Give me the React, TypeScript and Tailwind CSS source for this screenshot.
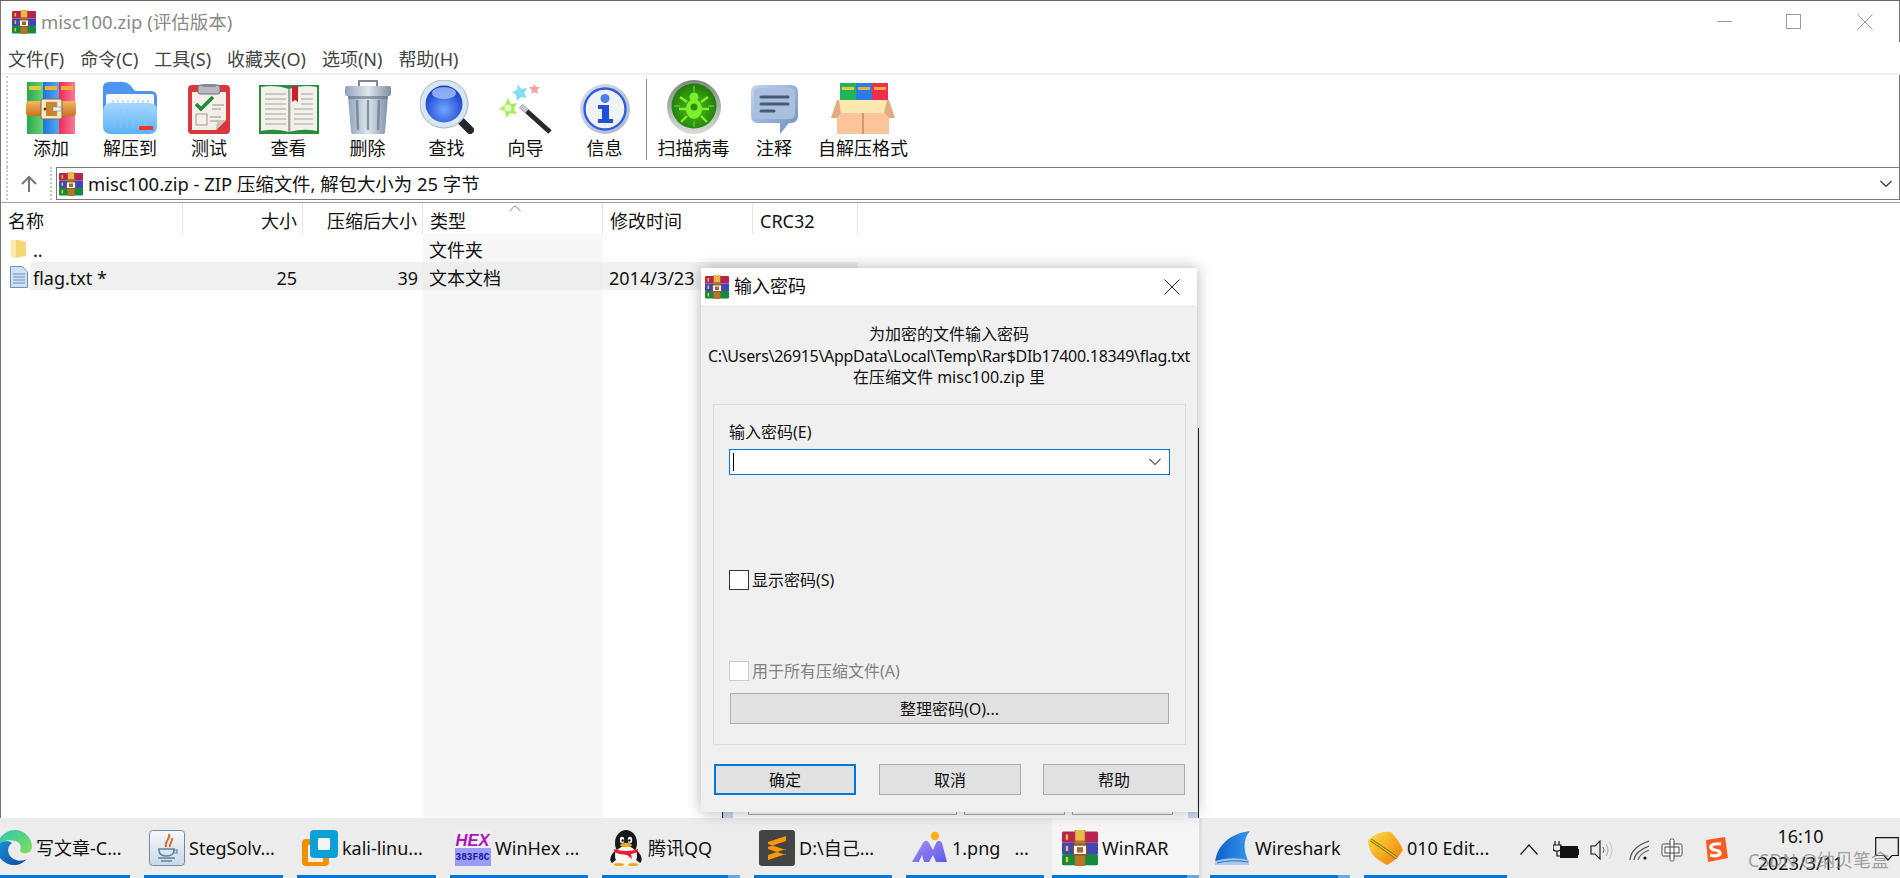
import React from "react";

function RarSmall({ s = 24 }: { s?: number }) {
  return (
    <svg width={s} height={s} viewBox="0 0 24 24" className="shrink-0">
      <rect x="0" y="1" width="24" height="7.5" rx="1" fill="#b9244f" />
      <rect x="0" y="8.5" width="24" height="7.5" fill="#3f46b8" />
      <rect x="0" y="16" width="24" height="7.5" rx="1" fill="#138a3c" />
      <rect x="2.5" y="3" width="1.6" height="3.5" fill="#f0c030" />
      <rect x="2.5" y="10.5" width="1.6" height="3.5" fill="#f0c030" />
      <rect x="2.5" y="18" width="1.6" height="3.5" fill="#f0c030" />
      <rect x="8.5" y="0" width="7" height="24" fill="#b9722a" />
      <rect x="9" y="0" width="6" height="7" fill="#e8bb48" />
      <rect x="7.5" y="10" width="9" height="6.5" fill="#f2f2f2" stroke="#7b4a1c" strokeWidth="0.8" />
      <rect x="10" y="11.5" width="4" height="3.5" fill="#9a6a30" />
    </svg>
  );
}

function IconAdd() {
  return (
    <svg width="50" height="52" viewBox="0 0 50 52">
      <defs>
        <linearGradient id="ga" x1="0" y1="0" x2="1" y2="0"><stop offset="0" stopColor="#2aa84c" /><stop offset="1" stopColor="#6ad070" /></linearGradient>
        <linearGradient id="gb" x1="0" y1="0" x2="1" y2="0"><stop offset="0" stopColor="#1c74e0" /><stop offset="1" stopColor="#58a8f5" /></linearGradient>
        <linearGradient id="gc" x1="0" y1="0" x2="1" y2="0"><stop offset="0" stopColor="#ee2a58" /><stop offset="1" stopColor="#f87a98" /></linearGradient>
        <linearGradient id="gd" x1="0" y1="0" x2="0" y2="1"><stop offset="0" stopColor="#f5b860" /><stop offset="1" stopColor="#c87424" /></linearGradient>
      </defs>
      <rect x="1" y="0" width="16" height="52" fill="url(#ga)" />
      <rect x="17" y="0" width="16" height="52" fill="url(#gb)" />
      <rect x="33" y="0" width="16" height="52" fill="url(#gc)" />
      <rect x="3" y="4" width="12" height="4" fill="#e8c93a" />
      <rect x="19" y="4" width="12" height="4" fill="#f0b030" />
      <rect x="35" y="4" width="12" height="4" fill="#f0b030" />
      <rect x="0" y="19" width="50" height="15" rx="3" fill="url(#gd)" />
      <rect x="15" y="17" width="21" height="20" rx="2" fill="#f4e9d0" stroke="#8a6a3a" strokeWidth="1" />
      <rect x="20" y="20" width="11" height="14" fill="#c8862e" />
      <circle cx="19" cy="27" r="1.5" fill="#5a3a10" />
      <rect x="27" y="25" width="8" height="4" fill="#f4f4f4" stroke="#888" strokeWidth="0.6" />
    </svg>
  );
}

function IconFolder() {
  return (
    <svg width="54" height="52" viewBox="0 0 54 52">
      <defs>
        <linearGradient id="fa" x1="0" y1="0" x2="0" y2="1"><stop offset="0" stopColor="#a8d8ff" /><stop offset="1" stopColor="#5ab2f6" /></linearGradient>
      </defs>
      <path d="M0 6Q0 0 6 0H20Q24 0 27 3L32 9H48Q54 9 54 15V30H0Z" fill="#4f94f0" />
      <rect x="3" y="12" width="48" height="22" rx="2" fill="#f4f8fc" />
      <g stroke="#b8c4d2" strokeWidth="1">
        <path d="M10 18V26M15 18V26M20 18V26M25 18V26M30 18V26M35 18V26M40 18V26M45 18V26" />
      </g>
      <path d="M0 30Q0 21 8 21H46Q54 21 54 29V44Q54 52 46 52H8Q0 52 0 44Z" fill="url(#fa)" />
      <g stroke="#8cc8f4" strokeWidth="1" opacity="0.7">
        <path d="M12 27V46M18 27V46M24 27V46M30 27V46M36 27V46M42 27V46" />
      </g>
      <rect x="36" y="44" width="14" height="4" fill="#e8382c" />
    </svg>
  );
}

function IconClip() {
  return (
    <svg width="42" height="50" viewBox="0 0 42 50">
      <rect x="0" y="1" width="42" height="49" rx="4" fill="#d9363e" />
      <path d="M4 8H38V36L28 46H4Z" fill="#f4f0e8" />
      <path d="M28 46L38 36H30Q28 40 28 46Z" fill="#c9c4ba" />
      <rect x="10" y="1" width="22" height="9" rx="2" fill="#b8b8c0" stroke="#6b6b75" strokeWidth="1" />
      <rect x="14" y="0" width="14" height="3" rx="1.5" fill="#8a8a92" />
      <path d="M8 20L13 25L25 13" fill="none" stroke="#1f8a3a" strokeWidth="3.6" />
      <path d="M24 21H36M24 25H33" stroke="#b5b0a6" strokeWidth="1.4" />
      <rect x="8" y="30" width="11" height="11" fill="#f4f0e8" stroke="#9c9a94" strokeWidth="1" />
      <path d="M22 33H33M22 37H30" stroke="#b5b0a6" strokeWidth="1.4" />
    </svg>
  );
}

function IconBook() {
  return (
    <svg width="60" height="49" viewBox="0 0 60 49">
      <path d="M0 0H60V49H0Z" fill="#2a8c3e" />
      <path d="M2 2Q16 -1 30 4Q44 -1 58 2V46Q44 43 30 47Q16 43 2 46Z" fill="#f2f0ea" />
      <rect x="29" y="4" width="2.5" height="43" fill="#a8a69f" />
      <g stroke="#bdbdb5" strokeWidth="1.3">
        <path d="M6 9H27M6 14H27M6 19H27M6 24H27M6 29H27M6 34H27M6 39H27" />
        <path d="M42 9H54M42 14H54M42 19H54M35 24H54M35 29H54M35 34H54M35 39H54" />
      </g>
      <path d="M33 1H39V17L36 15L33 17Z" fill="#c8202c" />
    </svg>
  );
}

function IconTrash() {
  return (
    <svg width="46" height="54" viewBox="0 0 46 54">
      <defs>
        <linearGradient id="ta" x1="0" y1="0" x2="1" y2="0"><stop offset="0" stopColor="#8fa3b8" /><stop offset="0.5" stopColor="#dfe7ee" /><stop offset="1" stopColor="#7c90a4" /></linearGradient>
      </defs>
      <path d="M14 6V1H32V6" fill="none" stroke="#7c8a98" strokeWidth="2" />
      <rect x="0" y="6" width="46" height="10" rx="2" fill="url(#ta)" />
      <path d="M3 16H43L40 52Q40 54 37 54H9Q6 54 6 52Z" fill="url(#ta)" />
      <g stroke="#66798c" strokeWidth="2.4" opacity="0.75">
        <path d="M12 20L13 50M23 20V50M34 20L33 50" />
      </g>
      <rect x="3" y="16" width="40" height="3" fill="#5f7286" opacity="0.6" />
    </svg>
  );
}

function IconFind() {
  return (
    <svg width="54" height="54" viewBox="0 0 54 54">
      <defs>
        <radialGradient id="fi" cx="0.5" cy="0.65" r="0.65"><stop offset="0" stopColor="#6ea6ff" /><stop offset="1" stopColor="#1438c8" /></radialGradient>
      </defs>
      <path d="M36 36L50 50" stroke="#23282e" strokeWidth="8" strokeLinecap="round" />
      <circle cx="24" cy="24" r="24" fill="#d8e6ee" stroke="#9cb4c4" strokeWidth="1" />
      <circle cx="24" cy="24" r="18.5" fill="url(#fi)" />
      <ellipse cx="24" cy="13" rx="12" ry="6" fill="#a8c8ff" opacity="0.75" />
    </svg>
  );
}

function IconWand() {
  return (
    <svg width="54" height="50" viewBox="0 0 54 50">
      <path d="M22 22L51 48" stroke="#2a2a2e" strokeWidth="5" />
      <path d="M22 22L28 27" stroke="#c8c8cc" strokeWidth="5" />
      <path d="M9 14L12 20L18 19L15 25L18 30L11 29L7 34L6 27L0 25L6 21Z" fill="#a8ee50" />
      <circle cx="9" cy="24" r="3.5" fill="#e8ffd0" />
      <path d="M19 0L22 5L28 4L25 9L28 14L22 13L18 17L17 11L13 8L18 6Z" fill="#7fe0f5" />
      <path d="M35 0L37 3L41 3L38 6L39 10L35 8L32 10L33 6L30 3L34 3Z" fill="#f8a0a8" />
    </svg>
  );
}

function IconInfo() {
  return (
    <svg width="50" height="50" viewBox="0 0 50 50">
      <defs>
        <linearGradient id="ia" x1="0" y1="0" x2="1" y2="1"><stop offset="0" stopColor="#d8dfe8" /><stop offset="1" stopColor="#aab8c8" /></linearGradient>
      </defs>
      <circle cx="25" cy="25" r="25" fill="url(#ia)" />
      <circle cx="25" cy="25" r="20.5" fill="#f0f2f6" stroke="#2f5fe0" strokeWidth="2.4" />
      <circle cx="25" cy="14.5" r="4.5" fill="#4f80e8" />
      <path d="M18 21H29V35H33V39H18V35H22V25H18Z" fill="#1f50d8" />
    </svg>
  );
}

function IconBug() {
  return (
    <svg width="54" height="54" viewBox="0 0 54 54">
      <defs>
        <linearGradient id="ba" x1="0" y1="0" x2="0" y2="1"><stop offset="0" stopColor="#7d8a7a" /><stop offset="1" stopColor="#d8dcd8" /></linearGradient>
        <radialGradient id="bb" cx="0.5" cy="0.55" r="0.55"><stop offset="0" stopColor="#4fc01a" /><stop offset="1" stopColor="#1f7a0c" /></radialGradient>
      </defs>
      <circle cx="27" cy="27" r="27" fill="url(#ba)" />
      <circle cx="27" cy="26" r="22.5" fill="url(#bb)" />
      <path d="M27 6V12M27 41V47M7 26H13M41 26H47" stroke="#5cc82c" strokeWidth="1.5" />
      <ellipse cx="27" cy="29" rx="8" ry="10" fill="#7df02c" />
      <circle cx="27" cy="17" r="4.5" fill="#7df02c" />
      <path d="M20 22L13 17M20 29H12M20 36L14 42M34 22L41 17M34 29H42M34 36L40 42" stroke="#7df02c" strokeWidth="2.4" fill="none" />
      <circle cx="27" cy="27" r="3.5" fill="#2f9010" />
    </svg>
  );
}

function IconNote() {
  return (
    <svg width="47" height="49" viewBox="0 0 47 49">
      <defs>
        <linearGradient id="na" x1="0" y1="0" x2="1" y2="1"><stop offset="0" stopColor="#c4d4ee" /><stop offset="1" stopColor="#6c90c4" /></linearGradient>
      </defs>
      <path d="M7 0H40Q47 0 47 7V30Q47 38 40 38H38L29 49V38H7Q0 38 0 30V7Q0 0 7 0Z" fill="url(#na)" />
      <path d="M7 3H40Q44 3 44 8V28Q44 34 38 34H8Q3 34 3 28V8Q3 3 7 3Z" fill="#a8bfe0" />
      <path d="M10 12H37M10 19H37M10 26H23" stroke="#4b5a70" strokeWidth="3" strokeLinecap="round" />
    </svg>
  );
}

function IconBox() {
  return (
    <svg width="64" height="51" viewBox="0 0 64 51">
      <rect x="9" y="0" width="16" height="20" fill="#22b45c" />
      <rect x="25" y="0" width="16" height="20" fill="#2a7ce8" />
      <rect x="41" y="0" width="16" height="20" fill="#f02c50" />
      <rect x="11" y="4" width="12" height="3" fill="#e8c93a" />
      <rect x="27" y="4" width="12" height="3" fill="#f0b030" />
      <rect x="43" y="4" width="12" height="3" fill="#f0b030" />
      <rect x="6" y="30" width="52" height="21" fill="#fcc49a" />
      <rect x="31" y="30" width="2" height="21" fill="#d8986e" />
      <path d="M0 35L6 17H58L64 35H58L54 30H10L6 35Z" fill="#e6aa80" />
      <path d="M8 17H56L53 30H10Z" fill="#fde8b0" />
    </svg>
  );
}

function EdgeIcon() {
  return (
    <svg width="36" height="36" viewBox="0 0 36 36" className="shrink-0">
      <defs>
        <linearGradient id="ea" x1="0" y1="0" x2="1" y2="1"><stop offset="0" stopColor="#2dc6b0" /><stop offset="1" stopColor="#7ee05c" /></linearGradient>
        <linearGradient id="eb" x1="0" y1="0" x2="1" y2="1"><stop offset="0" stopColor="#1a90d8" /><stop offset="1" stopColor="#0c4aa0" /></linearGradient>
      </defs>
      <path d="M1 17C2 7 10 0 19 0C29 0 36 8 36 17C36 22 31 24 27 23C20 22 30 14 19 11C11 9 4 12 1 17Z" fill="url(#ea)" />
      <path d="M1 17C4 11 12 9 16 13C11 16 11 23 15 27C20 32 27 31 31 29C26 35 17 37 10 33C3 29 0 23 1 17Z" fill="url(#eb)" />
    </svg>
  );
}

function JavaIcon() {
  return (
    <svg width="36" height="36" viewBox="0 0 36 36" className="shrink-0">
      <defs>
        <linearGradient id="ja" x1="0" y1="0" x2="0" y2="1"><stop offset="0" stopColor="#f6f8fa" /><stop offset="1" stopColor="#c8d8e8" /></linearGradient>
      </defs>
      <rect x="0.5" y="0.5" width="35" height="35" rx="3" fill="url(#ja)" stroke="#6f8aa4" />
      <path d="M20 4C22 9 15 11 17 17M23 8C24 12 20 13 21 17" fill="none" stroke="#d8702a" strokeWidth="2" />
      <path d="M10 19H25V20C25 25 22 26 17 26C13 26 10 25 10 20Z" fill="none" stroke="#5b82a0" strokeWidth="1.6" />
      <path d="M9 28H26M12 31H23" stroke="#5b82a0" strokeWidth="1.6" />
      <path d="M25 20H28V23H25" fill="none" stroke="#5b82a0" strokeWidth="1.2" />
    </svg>
  );
}

function VmIcon() {
  return (
    <svg width="36" height="36" viewBox="0 0 36 36" className="shrink-0">
      <rect x="0" y="9" width="27" height="27" rx="4" fill="#f09000" />
      <rect x="6" y="15" width="15" height="17" fill="#f8efe2" />
      <rect x="8" y="0" width="28" height="28" rx="4" fill="#0c9fd8" />
      <rect x="16" y="8" width="12" height="12" rx="1.5" fill="#f4f4f4" />
    </svg>
  );
}

function HexIcon() {
  return (
    <svg width="36" height="36" viewBox="0 0 36 36" className="shrink-0">
      <rect width="36" height="18" fill="#f0f0f4" />
      <rect y="18" width="36" height="18" fill="#9c9cf8" />
      <text x="0.5" y="16" fontSize="16" fontWeight="900" fontStyle="italic" fill="#b010b8" fontFamily="Liberation Sans" textLength="34" lengthAdjust="spacingAndGlyphs">HEX</text>
      <text x="0.5" y="30" fontSize="10" fontWeight="700" fill="#2020a0" fontFamily="Liberation Mono" textLength="34" lengthAdjust="spacingAndGlyphs">383F8C</text>
    </svg>
  );
}

function QQIcon() {
  return (
    <svg width="36" height="36" viewBox="0 0 36 36" className="shrink-0">
      <path d="M7 21C2 25 1 31 4 33L9 29Z M29 21C34 25 35 31 32 33L27 29Z" fill="#1a1a1a" />
      <ellipse cx="18" cy="13" rx="11" ry="13" fill="#18181a" />
      <ellipse cx="18" cy="26" rx="11" ry="10" fill="#fafafa" />
      <ellipse cx="14" cy="10" rx="2.2" ry="3.2" fill="#fff" />
      <ellipse cx="22" cy="10" rx="2.2" ry="3.2" fill="#fff" />
      <circle cx="14.6" cy="10.5" r="1.2" fill="#111" />
      <circle cx="21.4" cy="10.5" r="1.2" fill="#111" />
      <ellipse cx="18" cy="15" rx="6" ry="2.2" fill="#f0a818" />
      <path d="M6 19Q18 23 30 19L30 22Q24 24 23 24L24 29L19 25Q12 25 6 22Z" fill="#e82030" />
      <ellipse cx="11" cy="34.5" rx="5" ry="1.5" fill="#f0a818" />
      <ellipse cx="25" cy="34.5" rx="5" ry="1.5" fill="#f0a818" />
    </svg>
  );
}

function SublimeIcon() {
  return (
    <svg width="36" height="36" viewBox="0 0 36 36" className="shrink-0">
      <rect width="36" height="36" rx="3" fill="#444444" />
      <path d="M27 6L9 12V17L27 11Z M9 14L27 20V25L9 19Z M27 19L9 25V30L27 24Z" fill="#ff9800" />
    </svg>
  );
}

function MeituIcon() {
  return (
    <svg width="36" height="36" viewBox="0 0 36 36" className="shrink-0">
      <defs>
        <linearGradient id="ma" x1="0" y1="0" x2="1" y2="1"><stop offset="0" stopColor="#a78af5" /><stop offset="1" stopColor="#5c5ce8" /></linearGradient>
      </defs>
      <circle cx="23" cy="6" r="4.2" fill="#fdb010" />
      <path d="M0 32L11 13C13 10 15 10 17 13L21 20L24 13C26 10 28 10 30 13L35 32H24L21 25L17 32H12L10 25L7 32Z" fill="url(#ma)" />
    </svg>
  );
}

function SharkIcon() {
  return (
    <svg width="36" height="36" viewBox="0 0 36 36" className="shrink-0">
      <defs>
        <linearGradient id="sa" x1="0" y1="0" x2="1" y2="0"><stop offset="0" stopColor="#0a60c8" /><stop offset="1" stopColor="#3c96ec" /></linearGradient>
      </defs>
      <path d="M0 34C1 18 12 4 35 1C27 10 29 22 34 33Z" fill="url(#sa)" />
      <path d="M0 31Q16 26 34 30V35H0Z" fill="#a8c8ec" />
      <path d="M2 33Q17 29 33 32" stroke="#2a6ebc" strokeWidth="1" fill="none" />
    </svg>
  );
}

function EditorIcon() {
  return (
    <svg width="36" height="36" viewBox="0 0 36 36" className="shrink-0">
      <defs>
        <linearGradient id="oa" x1="0" y1="0" x2="1" y2="1"><stop offset="0" stopColor="#fce040" /><stop offset="1" stopColor="#f07808" /></linearGradient>
      </defs>
      <path d="M1 10Q12 0 24 2Q32 10 36 20Q30 30 20 35Q10 30 5 24Q1 16 1 10Z" fill="url(#oa)" />
      <path d="M4 10L30 28" stroke="#7a6a10" strokeWidth="3" />
      <path d="M4 10L30 28" stroke="#e8d030" strokeWidth="1.2" />
    </svg>
  );
}

function Tool({ label, w, children }: { label: string; w: string; children: React.ReactNode }) {
  return (
    <div className={`flex flex-col items-center shrink-0 ${w}`}>
      <div className="flex h-[56px] items-end justify-center pb-[2px]">{children}</div>
      <span className="whitespace-nowrap text-[18px] leading-[24px]">{label}</span>
    </div>
  );
}

function Cell({ className = "", children }: { className?: string; children?: React.ReactNode }) {
  return (
    <div className={`flex h-[28px] items-center whitespace-nowrap text-[18px] ${className}`}>
      {typeof children === "string" ? <span className="pt-[4px]">{children}</span> : children}
    </div>
  );
}

function Head({ right, children }: { right?: boolean; children?: React.ReactNode }) {
  return (
    <div className={`flex h-[31px] items-center border-r border-[#e5e5e5] pt-[6px] text-[18px] whitespace-nowrap ${right ? "justify-end pr-[5px]" : "pl-[7px]"}`}>
      {children}
    </div>
  );
}

function Task({
  icon, text, className = "", lead = "pl-[5px]", tail = false, active = false,
}: { icon: React.ReactNode; text: string; className?: string; lead?: string; tail?: boolean; active?: boolean }) {
  return (
    <div className={`flex h-full shrink-0 flex-col ${active ? "bg-[#f6f6f6]" : ""} ${className}`}>
      <div className={`flex flex-1 items-center gap-[4px] pt-[3px] ${lead}`}>
        {icon}
        <span className="whitespace-pre text-[18px] text-[#111]">{text}</span>
      </div>
      <div className="flex h-[3px]">
        <div className="flex-1 bg-[#0078d7]" />
        {tail && <div className="w-[12px] bg-[#68a9e2]" />}
      </div>
    </div>
  );
}

export default function App() {
  return (
    <div className="relative flex h-[878px] w-[1900px] flex-col overflow-hidden bg-white font-['Noto_Sans','Noto_Sans_CJK_SC',sans-serif] text-[#111]">
      <div className="h-px bg-[#6b6660]" />
      <div className="flex min-h-0 flex-1 flex-col border-l border-[#777]">
        {/* title */}
        <div className="flex h-[41px] items-center border-r border-[#777] pl-[11px] text-[#8a8a8a]">
          <RarSmall />
          <span className="ml-[5px] pt-[1px] text-[18.5px]">misc100.zip (评估版本)</span>
          <div className="ml-auto flex items-center pr-[26px]">
            <div className="h-px w-[15px] bg-[#999]" />
            <div className="ml-[54px] h-[15px] w-[15px] border border-[#999]" />
            <svg width="16" height="16" viewBox="0 0 16 16" className="ml-[56px]">
              <path d="M0.5 0.5L15.5 15.5M15.5 0.5L0.5 15.5" stroke="#999" strokeWidth="1" />
            </svg>
          </div>
        </div>
        {/* menu */}
        <div className="flex h-[31px] items-center gap-[16px] pl-[7px] pt-[3px] text-[18px] text-[#444]">
          <span>文件(F)</span>
          <span>命令(C)</span>
          <span>工具(S)</span>
          <span>收藏夹(O)</span>
          <span>选项(N)</span>
          <span>帮助(H)</span>
        </div>
        <div className="h-[2px] bg-[#f0f0f0]" />
        {/* toolbar */}
        <div className="flex h-[92px] border-r border-[#777]">
          <div className="ml-[5px] mt-[1px] w-0 border-l-2 border-dotted border-[#c8c8c8]" />
          <div className="ml-[3px] flex items-start pt-[5px]">
            <Tool label="添加" w="w-[80px]"><IconAdd /></Tool>
            <Tool label="解压到" w="w-[78px]"><IconFolder /></Tool>
            <Tool label="测试" w="w-[80px]"><IconClip /></Tool>
            <Tool label="查看" w="w-[79px]"><IconBook /></Tool>
            <Tool label="删除" w="w-[79px]"><IconTrash /></Tool>
            <Tool label="查找" w="w-[79px]"><IconFind /></Tool>
            <Tool label="向导" w="w-[79px]"><IconWand /></Tool>
            <Tool label="信息" w="w-[79px]"><IconInfo /></Tool>
            <div className="ml-[2px] mt-[-1px] h-[81px] w-px bg-[#888]" />
            <Tool label="扫描病毒" w="w-[93px]"><IconBug /></Tool>
            <Tool label="注释" w="w-[68px]"><IconNote /></Tool>
            <Tool label="自解压格式" w="w-[110px]"><IconBox /></Tool>
          </div>
        </div>
        {/* address */}
        <div className="flex h-[33px] items-stretch">
          <div className="ml-[5px] w-0 border-l-2 border-dotted border-[#c8c8c8]" />
          <div className="flex w-[42px] items-center justify-center">
            <svg width="18" height="18" viewBox="0 0 18 18">
              <path d="M9 17V2M2 9L9 2L16 9" fill="none" stroke="#777" strokeWidth="2" />
            </svg>
          </div>
          <div className="w-0 border-l-2 border-dotted border-[#c8c8c8]" />
          <div className="ml-[4px] flex flex-1 items-center border border-[#7a7a7a] pl-[2px] pr-[7px] text-[18.4px]">
            <RarSmall />
            <span className="ml-[5px]">misc100.zip - ZIP 压缩文件, 解包大小为 25 字节</span>
            <svg width="12" height="8" viewBox="0 0 12 8" className="ml-auto">
              <path d="M0.5 1L6 6.5L11.5 1" fill="none" stroke="#333" strokeWidth="1.2" />
            </svg>
          </div>
        </div>
        <div className="h-[3px] border-b border-[#a0a0a0]" />
        {/* list */}
        <div className="flex min-h-0 flex-1">
          <div className="w-[182px]">
            <Head>名称</Head>
            <Cell>
              <svg width="16" height="20" viewBox="0 0 16 20" className="ml-[10px] mr-[6px] mt-[2px]">
                <path d="M0 1H8L15 3V17L4 19L0 17Z" fill="#f6d777" />
                <path d="M0 1H5V19L0 17Z" fill="#fbe9a8" />
              </svg>
              <span className="pt-[4px]">..</span>
            </Cell>
            <Cell>
              <svg width="18" height="22" viewBox="0 0 18 22" className="ml-[9px] mr-[3px] mt-[1px]">
                <path d="M0.5 0.5H12L17.5 6V21.5H0.5Z" fill="#cfe2f3" stroke="#6b8fb5" />
                <path d="M3 8H15M3 11H15M3 14H15M3 17H15" stroke="#6b8fb5" strokeWidth="1" />
              </svg>
              <span className="flex h-full flex-1 items-center bg-[#f0f0f0] pl-[2px] pt-[4px]">flag.txt *</span>
            </Cell>
          </div>
          <div className="w-[120px]">
            <Head right>大小</Head>
            <Cell />
            <Cell className="justify-end bg-[#f0f0f0] pr-[6px]">25</Cell>
          </div>
          <div className="w-[120px]">
            <Head right>压缩后大小</Head>
            <Cell />
            <Cell className="justify-end bg-[#f0f0f0] pr-[5px]">39</Cell>
          </div>
          <div className="flex w-[180px] flex-col">
            <Head>
              类型
              <svg width="12" height="7" viewBox="0 0 12 7" className="mb-[26px] ml-[43px]">
                <path d="M0.5 6L6 0.8L11.5 6" fill="none" stroke="#888" strokeWidth="1" />
              </svg>
            </Head>
            <div className="flex-1 bg-[#f7f7f7]">
              <Cell className="pl-[6px]">文件夹</Cell>
              <Cell className="bg-[#eeeeee] pl-[6px]">文本文档</Cell>
            </div>
          </div>
          <div className="w-[150px]">
            <Head>修改时间</Head>
            <Cell />
            <Cell className="bg-[#f0f0f0] pl-[6px]">2014/3/23</Cell>
          </div>
          <div className="w-[105px]">
            <Head>CRC32</Head>
            <Cell />
            <Cell className="bg-[#f0f0f0]" />
          </div>
        </div>
      </div>

      {/* taskbar */}
      <div className="flex h-[60px] shrink-0 items-stretch bg-[#ececec]">
        <Task className="ml-[-8px] w-[138px]" lead="pl-[4px]" icon={<EdgeIcon />} text="写文章-C..." />
        <Task className="ml-[14px] w-[139px]" icon={<JavaIcon />} text="StegSolv..." />
        <Task className="ml-[14px] w-[139px]" icon={<VmIcon />} text="kali-linu..." />
        <Task className="ml-[14px] w-[138px]" icon={<HexIcon />} text="WinHex ..." />
        <Task className="ml-[14px] w-[138px]" lead="pl-[6px]" tail icon={<QQIcon />} text="腾讯QQ" />
        <Task className="ml-[14px] w-[138px]" icon={<SublimeIcon />} text="D:\自己..." />
        <Task className="ml-[14px] w-[138px]" lead="pl-[6px]" icon={<MeituIcon />} text="1.png   ..." />
        <Task className="ml-[8px] w-[150px] border-r-[3px] border-[#e0e0e0]" lead="pl-[10px]" active tail icon={<RarSmall s={36} />} text="WinRAR" />
        <Task className="ml-[8px] w-[140px]" tail icon={<SharkIcon />} text="Wireshark" />
        <Task className="ml-[14px] w-[143px]" lead="pl-[3px]" icon={<EditorIcon />} text="010 Edit..." />
        {/* tray */}
        <div className="flex items-center pt-[3px]">
          <svg width="18" height="11" viewBox="0 0 18 11" className="ml-[13px]">
            <path d="M0.5 10.5L9 1L17.5 10.5" fill="none" stroke="#111" strokeWidth="1.2" />
          </svg>
          <svg width="26" height="18" viewBox="0 0 26 18" className="ml-[15px]">
            <path d="M2 0V4M6 0V4M0 4H8V7Q8 10 5 10H3Q0 10 0 7ZM4 10V15H8" fill="none" stroke="#111" strokeWidth="1.2" />
            <rect x="7" y="5" width="18" height="12" fill="#111" />
            <rect x="25" y="8" width="1" height="6" fill="#111" />
          </svg>
          <svg width="23" height="22" viewBox="0 0 23 22" className="ml-[11px]">
            <path d="M1 7H5L10 2V20L5 15H1Z" fill="none" stroke="#111" strokeWidth="1.1" />
            <path d="M13 8Q15 11 13 14" fill="none" stroke="#666" />
            <path d="M16 5Q20 11 16 17" fill="none" stroke="#aaa" />
            <path d="M19 2Q25 11 19 20" fill="none" stroke="#ccc" />
          </svg>
          <svg width="20" height="20" viewBox="0 0 20 20" className="ml-[16px]">
            <path d="M1 20Q2 7 20 1" fill="none" stroke="#555" strokeWidth="1.3" />
            <path d="M5 20Q6 11 20 6" fill="none" stroke="#555" strokeWidth="1.3" />
            <path d="M9 20Q10 14 20 10" fill="none" stroke="#777" strokeWidth="1.3" />
            <circle cx="16" cy="18" r="1.6" fill="#111" />
          </svg>
          <svg width="24" height="24" viewBox="0 0 24 24" className="ml-[11px]">
            <rect x="2" y="6" width="20" height="12" rx="1.5" fill="#fff" stroke="#444" strokeWidth="1" />
            <rect x="10" y="1" width="4" height="22" rx="1.5" fill="#fff" stroke="#444" strokeWidth="1" />
            <rect x="5" y="9" width="14" height="6" fill="none" stroke="#444" strokeWidth="1" />
          </svg>
          <svg width="25" height="26" viewBox="0 0 25 26" className="ml-[19px]">
            <path d="M3 3L22 0L25 21L5 25Z" fill="#fc5a1e" />
            <path d="M18 7Q10 6 8 9Q7 12 12 13Q18 14 17 17Q14 20 7 18" fill="none" stroke="#fff" strokeWidth="3.2" />
          </svg>
          <div className="ml-[25px] flex w-[95px] flex-col items-center text-[18px] leading-[27px]">
            <span>16:10</span>
            <span>2023/3/11</span>
          </div>
          <svg width="25" height="25" viewBox="0 0 25 25" className="ml-[27px] shrink-0">
            <path d="M0.7 0.7H23.3V18.5H17L13 23L9 18.5H0.7Z" fill="none" stroke="#111" strokeWidth="1.2" />
          </svg>
        </div>
      </div>

      {/* window behind the dialog */}
      <div className="absolute left-[722px] top-[428px] flex h-[390px] w-[477px] flex-col justify-end border-x border-[#222]">
        <div className="flex h-[6px] items-start">
          <div className="h-full w-[10px] bg-[#c8d8ec]" />
          <div className="ml-[15px] h-[3px] w-[209px] border border-t-0 border-[#aaa]" />
          <div className="ml-[7px] h-[3px] w-[101px] border border-t-0 border-[#aaa]" />
          <div className="ml-[7px] h-[3px] w-[101px] border border-t-0 border-[#aaa]" />
          <div className="ml-auto h-full w-[10px] bg-[#c8d8ec]" />
        </div>
      </div>

      {/* dialog */}
      <div className="absolute left-[701px] top-[268px] flex h-[544px] w-[496px] flex-col bg-[#f0f0f0] text-[16px] shadow-[0_0_14px_rgba(0,0,0,0.3)]">
        <div className="flex h-[37px] items-center bg-white pl-[4px] pr-[17px] text-[18px]">
          <RarSmall />
          <span className="ml-[5px]">输入密码</span>
          <svg width="16" height="16" viewBox="0 0 16 16" className="ml-auto">
            <path d="M0.5 0.5L15.5 15.5M15.5 0.5L0.5 15.5" stroke="#222" strokeWidth="1" />
          </svg>
        </div>
        <div className="mt-[19px] flex flex-col items-center text-[16px] leading-[21.5px]">
          <span>为加密的文件输入密码</span>
          <span className="whitespace-nowrap tracking-[-0.3px]">C:\Users\26915\AppData\Local\Temp\Rar$DIb17400.18349\flag.txt</span>
          <span>在压缩文件 misc100.zip 里</span>
        </div>
        <div className="mx-[12px] mt-[15px] flex h-[341px] w-[473px] flex-col border border-[#dcdcdc] pl-[15px]">
          <div className="mt-[16px] h-[20px] pt-[1px] leading-[20px]">输入密码(E)</div>
          <div className="mt-[8px] flex h-[26px] w-[441px] items-center border border-[#0078d7] bg-white pl-[3px] pr-[8px]">
            <div className="h-[18px] w-px bg-black" />
            <svg width="12" height="8" viewBox="0 0 12 8" className="ml-auto">
              <path d="M0.5 1L6 6.5L11.5 1" fill="none" stroke="#555" strokeWidth="1.1" />
            </svg>
          </div>
          <div className="mt-[95px] flex h-[20px] items-center gap-[3px]">
            <div className="h-[20px] w-[20px] border border-[#333] bg-white" />
            <span className="pt-[1px]">显示密码(S)</span>
          </div>
          <div className="mt-[71px] flex h-[20px] items-center gap-[3px] text-[#808080]">
            <div className="h-[20px] w-[20px] border border-[#cccccc] bg-white" />
            <span className="pt-[1px]">用于所有压缩文件(A)</span>
          </div>
          <button className="ml-[1px] mt-[12px] h-[31px] w-[439px] border border-[#adadad] bg-[#e1e1e1] pt-[1px] text-[16px]">整理密码(O)...</button>
        </div>
        <div className="ml-[13px] mt-[19px] flex gap-[23px]">
          <button className="h-[31px] w-[142px] border-2 border-[#0078d7] bg-[#e1e1e1] pt-[1px] text-[16px]">确定</button>
          <button className="h-[31px] w-[142px] border border-[#adadad] bg-[#e1e1e1] pt-[1px] text-[16px]">取消</button>
          <button className="ml-[-1px] h-[31px] w-[142px] border border-[#adadad] bg-[#e1e1e1] pt-[1px] text-[16px]">帮助</button>
        </div>
      </div>

      {/* watermark */}
      <div className="absolute left-[1748px] top-[848px] whitespace-nowrap text-[18px] leading-[24px] text-[#7d7d7d]/70">CSDN @纳贝笔盒</div>
    </div>
  );
}
